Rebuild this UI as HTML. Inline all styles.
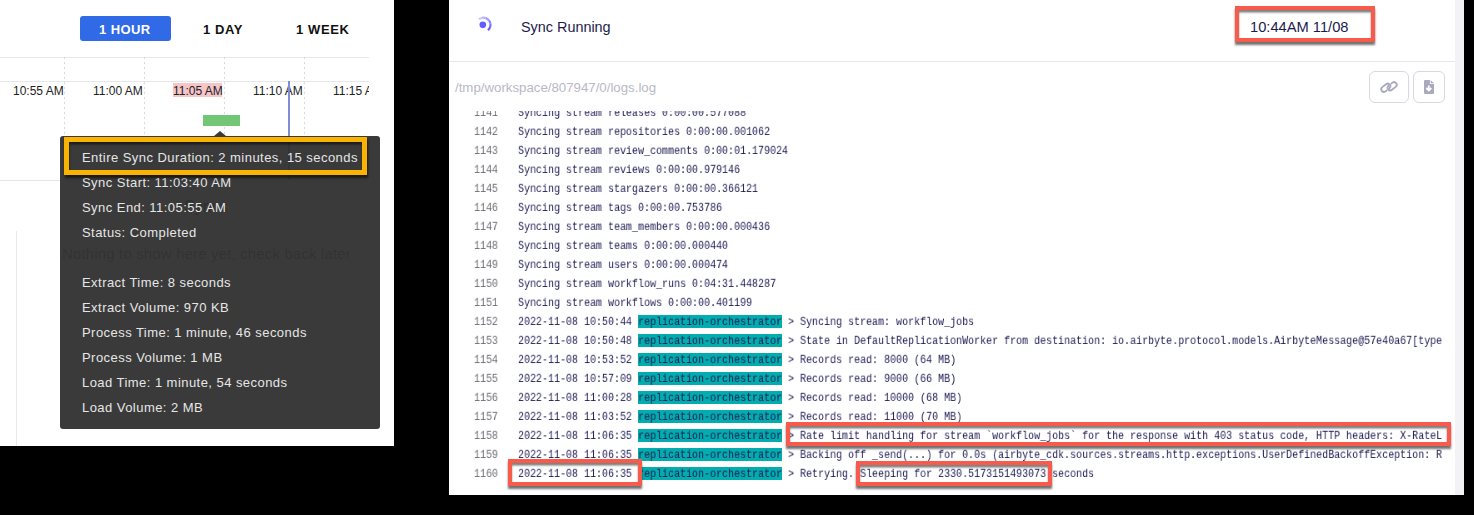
<!DOCTYPE html>
<html><head><meta charset="utf-8">
<style>
*{box-sizing:border-box;margin:0;padding:0}
html,body{width:1474px;height:515px;overflow:hidden;background:#000}
body{position:relative;font-family:"Liberation Sans",sans-serif}
.abs{position:absolute}
#left{position:absolute;left:0;top:0;width:394px;height:446px;background:#fff;overflow:hidden}
#right{position:absolute;left:449px;top:0;width:1015px;height:495px;background:#fff;overflow:hidden}
.hl{position:absolute;height:1px;background:#e6e6ec}
.dot{position:absolute;width:1px;background:repeating-linear-gradient(to bottom,#d8d8e0 0 2px,transparent 2px 5px)}
.btn{position:absolute;font:bold 13px "Liberation Sans",sans-serif;line-height:25px;color:#111;letter-spacing:0.2px}
.lbl{position:absolute;font:12px "Liberation Sans",sans-serif;color:#222;line-height:14px;white-space:pre}
.tt{position:absolute;font:13px "Liberation Sans",sans-serif;color:#e6e6e6;letter-spacing:0.45px;white-space:pre;line-height:16px}
.ln,.tx{position:absolute;font:12px "Liberation Mono",monospace;color:#1d1b52;white-space:pre;transform:scale(0.83333,0.92);transform-origin:0 0;line-height:19px;will-change:transform}
.ln{left:474px;color:#6a6a72}
.tx{left:518px}
.teal{position:absolute;background:#03acae;height:13px}
.red{position:absolute;border:4px solid #f85a4c;box-shadow:0 2.5px 2px rgba(0,0,0,.55),inset 0 2.5px 2px rgba(0,0,0,.5)}
</style></head><body>

<div id="left">
  <div class="abs" style="left:80px;top:16px;width:91px;height:25px;background:#306ae7;border-radius:3px"></div>
  <div class="btn" style="left:99px;top:17px;color:#fff;letter-spacing:0.4px">1 HOUR</div>
  <div class="btn" style="left:203px;top:17px;letter-spacing:0.6px">1 DAY</div>
  <div class="btn" style="left:296px;top:17px;letter-spacing:0.6px">1 WEEK</div>

  <div class="hl" style="left:0;top:57px;width:369px"></div>
  <div class="hl" style="left:0;top:81px;width:369px"></div>
  <div class="hl" style="left:0;top:180px;width:369px"></div>
  <div class="dot" style="left:64px;top:57px;height:123px"></div>
  <div class="dot" style="left:144px;top:57px;height:123px"></div>
  <div class="dot" style="left:224px;top:57px;height:123px"></div>
  <div class="dot" style="left:304px;top:57px;height:123px"></div>

  <div class="abs" style="left:173px;top:83px;width:49px;height:14px;background:#f5c5c8"></div>
  <div class="lbl" style="left:13px;top:84px">10:55 AM</div>
  <div class="lbl" style="left:93px;top:84px">11:00 AM</div>
  <div class="lbl" style="left:173px;top:84px">11:05 AM</div>
  <div class="lbl" style="left:253px;top:84px">11:10 AM</div>
  <div class="abs" style="left:0;top:84px;width:369px;height:14px;overflow:hidden"><div class="lbl" style="left:333px;top:0px">11:15 AM</div></div>

  <div class="abs" style="left:203px;top:115px;width:37px;height:11px;background:#74c677"></div>
  <div class="abs" style="left:288px;top:81px;width:2px;height:99px;background:#7d8fd2"></div>

  <div class="abs" style="left:16px;top:231px;width:1px;height:215px;background:#e8e8f0"></div>
  <div class="abs" style="left:184px;top:198px;font:16px 'Liberation Sans';color:#222">Syncs</div>
  <div class="abs" style="left:62px;top:245px;font:15px 'Liberation Sans';color:#6a6a6a;letter-spacing:0.15px">Nothing to show here yet, check back later</div>

  <!-- tooltip -->
  <div class="abs" style="left:214px;top:131px;width:0;height:0;border-left:6px solid transparent;border-right:6px solid transparent;border-bottom:5px solid rgba(47,47,47,.95)"></div>
  <div class="abs" style="left:60px;top:136px;width:320px;height:293px;background:rgba(47,47,47,.95);border-radius:3px"></div>
  <div class="tt" style="left:82px;top:150px">Entire Sync Duration: 2 minutes, 15 seconds</div>
  <div class="tt" style="left:82px;top:175px">Sync Start: 11:03:40 AM</div>
  <div class="tt" style="left:82px;top:200px">Sync End: 11:05:55 AM</div>
  <div class="tt" style="left:82px;top:225px">Status: Completed</div>
  <div class="tt" style="left:82px;top:275px">Extract Time: 8 seconds</div>
  <div class="tt" style="left:82px;top:300px">Extract Volume: 970 KB</div>
  <div class="tt" style="left:82px;top:325px">Process Time: 1 minute, 46 seconds</div>
  <div class="tt" style="left:82px;top:350px">Process Volume: 1 MB</div>
  <div class="tt" style="left:82px;top:375px">Load Time: 1 minute, 54 seconds</div>
  <div class="tt" style="left:82px;top:400px">Load Volume: 2 MB</div>
  <div class="abs" style="left:64px;top:137px;width:303px;height:38px;border:5.5px solid #f8b400;box-shadow:0.5px 2.5px 2px rgba(0,0,0,.55),inset 0.5px 2.5px 2px rgba(0,0,0,.5)"></div>
</div>

<div id="right">
  <div class="abs" style="left:1006px;top:0;width:9px;height:495px;background:#f3f3f6"></div>
  <div class="abs" style="left:0;top:61px;width:1006px;height:1px;background:#e6e6ee"></div>
  <svg class="abs" style="left:21px;top:12px" width="26" height="26" viewBox="0 0 26 26">
    <circle cx="12.8" cy="12.85" r="3.3" fill="#615eff"/>
    <path d="M8.84 7.36 A7.1 7.1 0 0 1 12.17 5.81" stroke="#615eff" stroke-opacity="0.33" stroke-width="2.2" fill="none"/>
    <path d="M12.17 5.81 A7.1 7.1 0 0 1 15.83 6.13" stroke="#615eff" stroke-opacity="0.47" stroke-width="2.2" fill="none"/>
    <path d="M15.83 6.13 A7.1 7.1 0 0 1 18.84 8.24" stroke="#615eff" stroke-opacity="0.60" stroke-width="2.2" fill="none"/>
    <path d="M18.84 8.24 A7.1 7.1 0 0 1 20.39 11.57" stroke="#615eff" stroke-opacity="0.73" stroke-width="2.2" fill="none"/>
    <path d="M20.39 11.57 A7.1 7.1 0 0 1 20.07 15.23" stroke="#615eff" stroke-opacity="0.87" stroke-width="2.2" fill="none"/>
    <path d="M20.07 15.23 A7.1 7.1 0 0 1 17.96 18.24" stroke="#615eff" stroke-opacity="1.00" stroke-width="2.2" fill="none"/>
  </svg>
  <div class="abs" style="left:72px;top:19px;font:14.4px 'Liberation Sans';color:#1c1b4d;white-space:pre">Sync Running</div>
  <div class="abs" style="left:801px;top:19px;font:14.7px 'Liberation Sans';color:#1c1b4d;white-space:pre">10:44AM 11/08</div>

  <div class="abs" style="left:6px;top:79.5px;font:13.25px 'Liberation Sans';color:#b9b8c8;white-space:pre">/tmp/workspace/807947/0/logs.log</div>
  <div class="abs" style="left:920px;top:71px;width:40px;height:32px;border:1px solid #d8d7e2;border-radius:6px"></div>
  <div class="abs" style="left:964px;top:71px;width:32px;height:32px;border:1px solid #d8d7e2;border-radius:6px"></div>
  <svg class="abs" style="left:929px;top:76px" width="22" height="22" viewBox="-11 -11 22 22">
    <g fill="none" stroke="#a9a8bd" stroke-width="1.6" stroke-linecap="round" transform="scale(1.1)">
      <path transform="translate(-2.9 0.7) rotate(-38)" d="M-0.9 2.4 H-2.2 A2.4 2.4 0 0 1 -2.2 -2.4 H2.2 A2.4 2.4 0 0 1 2.2 2.4 H1.7"/>
      <path transform="translate(2.9 -0.7) rotate(-38)" d="M0.9 -2.4 H2.2 A2.4 2.4 0 0 1 2.2 2.4 H-2.2 A2.4 2.4 0 0 1 -2.2 -2.4 H-1.7"/>
    </g>
  </svg>
  <svg class="abs" style="left:975px;top:80px" width="10" height="14" viewBox="0 0 10 14">
    <path d="M1.2 0 H5.9 V4.1 H10 V12.8 A1.2 1.2 0 0 1 8.8 14 H1.2 A1.2 1.2 0 0 1 0 12.8 V1.2 A1.2 1.2 0 0 1 1.2 0Z" fill="#a9a8bd"/>
    <path d="M6.7 0.3 L10 3.3 H6.7Z" fill="#a9a8bd"/>
    <path d="M4.8 5.5 V10.2 M2.3 8 L4.8 10.5 L7.3 8" stroke="#fff" stroke-width="1.8" fill="none"/>
  </svg>
</div>

<!-- log area (page coords) -->
<div class="abs" style="left:449px;top:111px;width:1006px;height:384px;overflow:hidden">
  <div class="abs" style="left:0;top:-111px;width:1006px;height:495px">
    <div class="teal" style="left:189px;top:315px;width:144px"></div>
    <div class="teal" style="left:189px;top:334px;width:144px"></div>
    <div class="teal" style="left:189px;top:353px;width:144px"></div>
    <div class="teal" style="left:189px;top:372px;width:144px"></div>
    <div class="teal" style="left:189px;top:391px;width:144px"></div>
    <div class="teal" style="left:189px;top:410px;width:144px"></div>
    <div class="teal" style="left:189px;top:429px;width:144px"></div>
    <div class="teal" style="left:189px;top:448px;width:144px"></div>
    <div class="teal" style="left:189px;top:467px;width:144px"></div>
  </div>
</div>
<div class="abs" style="left:0;top:111px;width:1443px;height:384px;overflow:hidden">
  <div class="ln" style="top:-6px">1141</div><div class="tx" style="top:-6px">Syncing stream releases 0:00:00.577088</div>
  <div class="ln" style="top:13px">1142</div><div class="tx" style="top:13px">Syncing stream repositories 0:00:00.001062</div>
  <div class="ln" style="top:32px">1143</div><div class="tx" style="top:32px">Syncing stream review_comments 0:00:01.179024</div>
  <div class="ln" style="top:51px">1144</div><div class="tx" style="top:51px">Syncing stream reviews 0:00:00.979146</div>
  <div class="ln" style="top:70px">1145</div><div class="tx" style="top:70px">Syncing stream stargazers 0:00:00.366121</div>
  <div class="ln" style="top:89px">1146</div><div class="tx" style="top:89px">Syncing stream tags 0:00:00.753786</div>
  <div class="ln" style="top:108px">1147</div><div class="tx" style="top:108px">Syncing stream team_members 0:00:00.000436</div>
  <div class="ln" style="top:127px">1148</div><div class="tx" style="top:127px">Syncing stream teams 0:00:00.000440</div>
  <div class="ln" style="top:146px">1149</div><div class="tx" style="top:146px">Syncing stream users 0:00:00.000474</div>
  <div class="ln" style="top:165px">1150</div><div class="tx" style="top:165px">Syncing stream workflow_runs 0:04:31.448287</div>
  <div class="ln" style="top:184px">1151</div><div class="tx" style="top:184px">Syncing stream workflows 0:00:00.401199</div>
  <div class="ln" style="top:203px">1152</div><div class="tx" style="top:203px">2022-11-08 10:50:44 replication-orchestrator &gt; Syncing stream: workflow_jobs</div>
  <div class="ln" style="top:222px">1153</div><div class="tx" style="top:222px">2022-11-08 10:50:48 replication-orchestrator &gt; State in DefaultReplicationWorker from destination: io.airbyte.protocol.models.AirbyteMessage@57e40a67[type</div>
  <div class="ln" style="top:241px">1154</div><div class="tx" style="top:241px">2022-11-08 10:53:52 replication-orchestrator &gt; Records read: 8000 (64 MB)</div>
  <div class="ln" style="top:260px">1155</div><div class="tx" style="top:260px">2022-11-08 10:57:09 replication-orchestrator &gt; Records read: 9000 (66 MB)</div>
  <div class="ln" style="top:279px">1156</div><div class="tx" style="top:279px">2022-11-08 11:00:28 replication-orchestrator &gt; Records read: 10000 (68 MB)</div>
  <div class="ln" style="top:298px">1157</div><div class="tx" style="top:298px">2022-11-08 11:03:52 replication-orchestrator &gt; Records read: 11000 (70 MB)</div>
  <div class="ln" style="top:317px">1158</div><div class="tx" style="top:317px">2022-11-08 11:06:35 replication-orchestrator &gt; Rate limit handling for stream `workflow_jobs` for the response with 403 status code, HTTP headers: X-RateL</div>
  <div class="ln" style="top:336px">1159</div><div class="tx" style="top:336px">2022-11-08 11:06:35 replication-orchestrator &gt; Backing off _send(...) for 0.0s (airbyte_cdk.sources.streams.http.exceptions.UserDefinedBackoffException: R</div>
  <div class="ln" style="top:355px">1160</div><div class="tx" style="top:355px">2022-11-08 11:06:35 replication-orchestrator &gt; Retrying. Sleeping for 2330.5173151493073 seconds</div>
</div>
<!-- annotation boxes -->
<div class="red" style="left:1235px;top:6px;width:140px;height:36px"></div>
<div class="red" style="left:786px;top:422px;width:665px;height:24px"></div>
<div class="red" style="left:508px;top:459px;width:134px;height:27px"></div>
<div class="red" style="left:856px;top:461px;width:196px;height:25px"></div>

</body></html>
